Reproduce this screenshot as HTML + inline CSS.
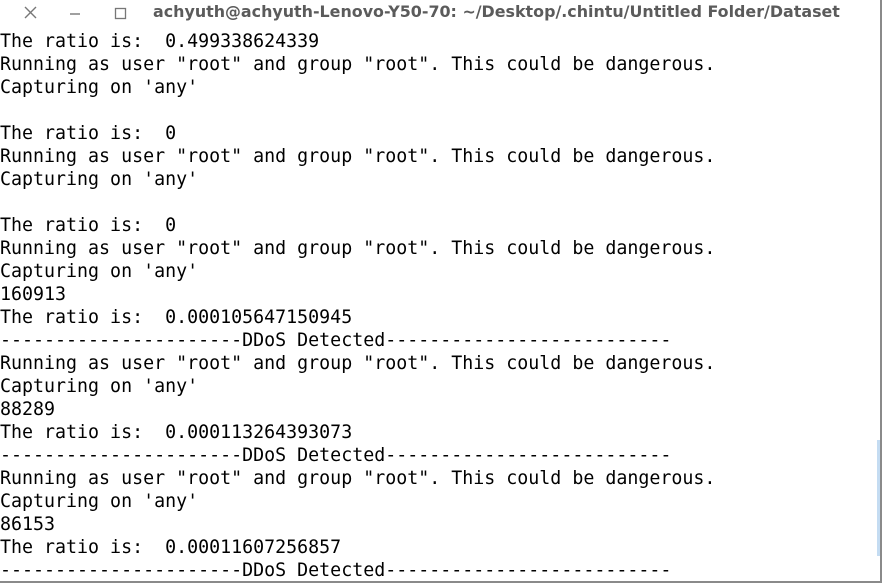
<!DOCTYPE html>
<html><head><meta charset="utf-8"><style>
html,body{margin:0;padding:0;width:882px;height:583px;overflow:hidden;background:#fff;}
.title{position:absolute;left:0;top:0;width:882px;height:26px;}
.t{position:absolute;left:153px;top:2px;font:bold 15.9px "DejaVu Sans","Liberation Sans",sans-serif;color:#5b5b5b;white-space:nowrap;}
.term{position:absolute;left:0;top:30px;font-family:"DejaVu Sans Mono","Liberation Mono",monospace;font-size:18.3px;line-height:23px;color:#000;white-space:pre;margin:0;}
.rb{position:absolute;left:880px;top:0;width:2px;height:583px;background:#8a8a8a;}
.bb{position:absolute;left:0;top:581px;width:882px;height:2px;background:#8a8a8a;}
.sb{position:absolute;left:877px;top:440px;width:3px;height:116px;background:#c4dcf2;}
</style></head><body>
<div class="title">
<svg width="140" height="26" style="position:absolute;left:0;top:0">
<path d="M25 7 L36 18 M36 7 L25 18" stroke="#777" stroke-width="1.4"/>
<path d="M70 14 H80" stroke="#777" stroke-width="1.4"/>
<rect x="115.5" y="8.5" width="10" height="10" fill="none" stroke="#777" stroke-width="1.3"/>
</svg>
<div class="t">achyuth@achyuth-Lenovo-Y50-70: ~/Desktop/.chintu/Untitled Folder/Dataset</div>
</div>
<pre class="term">The ratio is:  0.499338624339
Running as user "root" and group "root". This could be dangerous.
Capturing on 'any'

The ratio is:  0
Running as user "root" and group "root". This could be dangerous.
Capturing on 'any'

The ratio is:  0
Running as user "root" and group "root". This could be dangerous.
Capturing on 'any'
160913
The ratio is:  0.000105647150945
----------------------DDoS Detected--------------------------
Running as user "root" and group "root". This could be dangerous.
Capturing on 'any'
88289
The ratio is:  0.000113264393073
----------------------DDoS Detected--------------------------
Running as user "root" and group "root". This could be dangerous.
Capturing on 'any'
86153
The ratio is:  0.00011607256857
----------------------DDoS Detected--------------------------</pre>
<div class="sb"></div><div class="rb"></div><div class="bb"></div>
</body></html>
